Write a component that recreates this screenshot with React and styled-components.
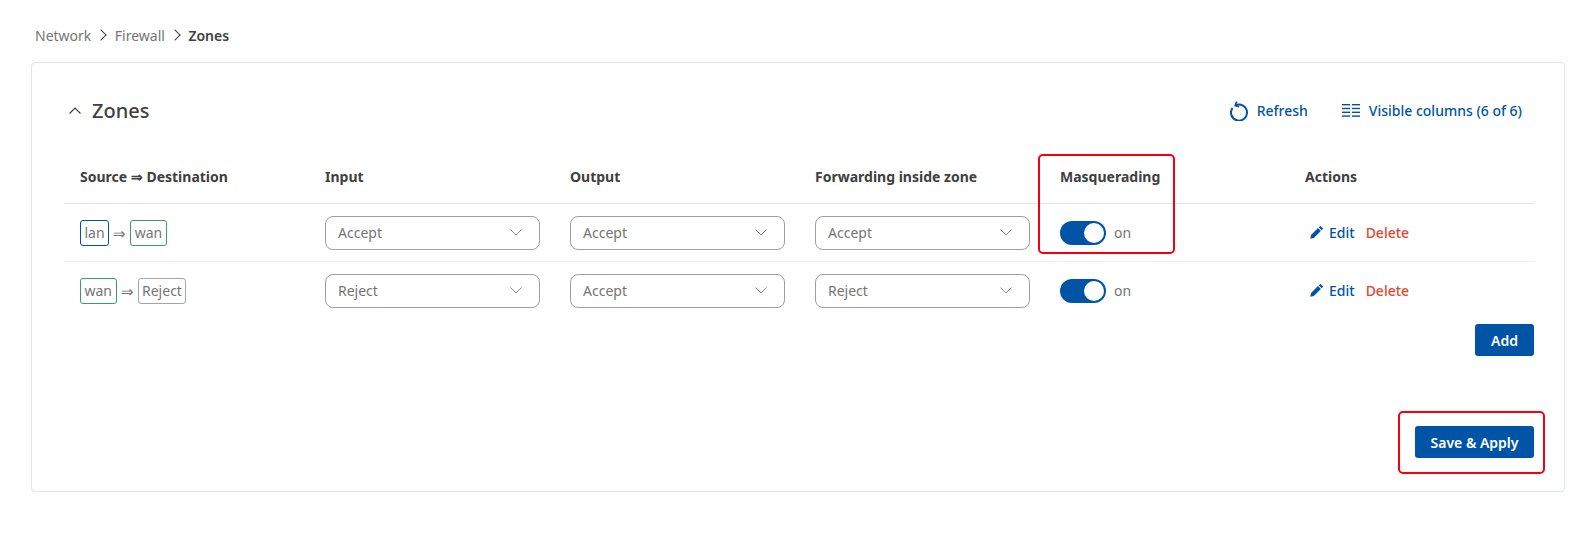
import React from 'react';
import styled, { createGlobalStyle } from 'styled-components';

const GlobalStyle = createGlobalStyle`
    html, body {
        margin: 0;
        padding: 0;
        background: #fff;
        font-family: "Noto Sans", "Open Sans", sans-serif;
        color: #404040;
    }
`;

const rows = [
    { from: ['lan', 'blue'], to: ['wan', 'green'], input: 'Accept', output: 'Accept', forward: 'Accept' },
    { from: ['wan', 'green'], to: ['Reject', 'gray'], input: 'Reject', output: 'Accept', forward: 'Reject' },
];

const Chevron = () => (
    <svg width="12" height="7" viewBox="0 0 12 7" fill="none" stroke="#8a8a94" strokeWidth="1">
        <path d="M0.5 0.5L6 6l5.5-5.5" />
    </svg>
);

const Select = ({ value }) => (
    <SelectBox>
        <span>{value}</span>
        <Chevron />
    </SelectBox>
);

function App() {
    return (
        <Page>
            <GlobalStyle />
            <Breadcrumbs>
                <span>Network</span>
                <Crumb />
                <span>Firewall</span>
                <Crumb />
                <strong>Zones</strong>
            </Breadcrumbs>
            <Card>
                <CardHeader>
                    <Title>
                        <svg width="12" height="7" viewBox="0 0 12 7" fill="none" stroke="#404040" strokeWidth="1.2">
                            <path d="M0.5 6.5L6 1l5.5 5.5" />
                        </svg>
                        Zones
                    </Title>
                    <Tools>
                        <ToolLink>
                            <svg width="18" height="20" viewBox="0 0 18 20" fill="none" stroke="#0054a6" strokeWidth="2">
                                <path d="M5.5 4.4A8 8 0 1 1 2.6 6.8" />
                                <path d="M6.6 0.6L5.2 4.6l4 1.2" strokeWidth="1.7" />
                            </svg>
                            Refresh
                        </ToolLink>
                        <ToolLink>
                            <svg width="18" height="13" viewBox="0 0 18 13" fill="#0054a6">
                                <rect x="0" y="0" width="8" height="1.4" />
                                <rect x="0" y="3.8" width="8" height="1.4" />
                                <rect x="0" y="7.6" width="8" height="1.4" />
                                <rect x="0" y="11.4" width="8" height="1.4" />
                                <rect x="10" y="0" width="8" height="1.4" />
                                <rect x="10" y="3.8" width="8" height="1.4" />
                                <rect x="10" y="7.6" width="8" height="1.4" />
                                <rect x="10" y="11.4" width="8" height="1.4" />
                            </svg>
                            Visible columns (6 of 6)
                        </ToolLink>
                    </Tools>
                </CardHeader>

                <HeadRow>
                    <HeadCell>Source ⇒ Destination</HeadCell>
                    <HeadCell>Input</HeadCell>
                    <HeadCell>Output</HeadCell>
                    <HeadCell>Forwarding inside zone</HeadCell>
                    <HeadCell>Masquerading</HeadCell>
                    <HeadCell>Actions</HeadCell>
                </HeadRow>

                {rows.map((row, i) => (
                    <Row key={i} $last={i === rows.length - 1}>
                        <Cell>
                            <Tag $tone={row.from[1]}>{row.from[0]}</Tag>
                            <Arrow>⇒</Arrow>
                            <Tag $tone={row.to[1]}>{row.to[0]}</Tag>
                        </Cell>
                        <Cell><Select value={row.input} /></Cell>
                        <Cell><Select value={row.output} /></Cell>
                        <Cell><Select value={row.forward} /></Cell>
                        <Cell>
                            <Toggle />
                            <ToggleLabel>on</ToggleLabel>
                        </Cell>
                        <Cell>
                            <EditLink>
                                <svg width="13" height="13" viewBox="0 0 13 13" fill="#0054a6">
                                    <path d="M0.3 12.7l0.7-3.6 7-7 2.9 2.9-7 7z" />
                                    <path d="M8.8 1.3l0.9-0.9a1 1 0 0 1 1.4 0l1.5 1.5a1 1 0 0 1 0 1.4l-0.9 0.9z" />
                                </svg>
                                Edit
                            </EditLink>
                            <DeleteLink>Delete</DeleteLink>
                        </Cell>
                    </Row>
                ))}

                <AddRow>
                    <Button $minWidth={59}>Add</Button>
                </AddRow>
                <SaveRow>
                    <Button>Save &amp; Apply</Button>
                </SaveRow>
            </Card>
            <Highlight $left={1038} $top={154} $width={137} $height={100} />
            <Highlight $left={1398} $top={411} $width={147} $height={63} />
        </Page>
    );
}

export default App;

const Page = styled.div`
    position: relative;
    width: 1575px;
    height: 539px;
    overflow: hidden;
    padding: 25px 10px 0 31px;
    box-sizing: border-box;
`;

const Breadcrumbs = styled.div`
    display: flex;
    align-items: center;
    height: 20px;
    margin-left: 4px;
    font-size: 14px;
    color: #757575;

    strong {
        font-weight: 600;
        color: #404040;
    }
`;

const Crumb = styled.i`
    width: 7px;
    height: 7px;
    margin: 0 9.5px 0 6px;
    border-top: 1px solid #404040;
    border-right: 1px solid #404040;
    transform: rotate(45deg);
`;

const Card = styled.div`
    margin-top: 17px;
    width: 1534px;
    height: 430px;
    box-sizing: border-box;
    padding: 0 30px 0 32px;
    border: 1px solid #dfe5ee;
    border-radius: 4px;
`;

const CardHeader = styled.div`
    display: flex;
    align-items: center;
    justify-content: space-between;
    height: 93px;
    padding: 2px 12px 0 5px;
    box-sizing: border-box;
`;

const Title = styled.div`
    display: flex;
    align-items: center;
    gap: 11px;
    font-size: 20px;
    font-weight: 500;
    color: #404040;
`;

const Tools = styled.div`
    display: flex;
    align-items: center;
    gap: 34px;
`;

const ToolLink = styled.a`
    display: flex;
    align-items: center;
    gap: 9px;
    font-size: 14px;
    font-weight: 500;
    color: #0054a6;
`;

const gridColumns = `
    display: grid;
    grid-template-columns: repeat(6, 245px);
    align-items: center;
    box-sizing: border-box;
`;

const HeadRow = styled.div`
    ${gridColumns}
    height: 48px;
    padding-bottom: 6px;
    border-bottom: 1px solid #e2e5ee;
`;

const HeadCell = styled.div`
    padding-left: 16px;
    font-size: 14px;
    font-weight: 700;
    color: #404040;
`;

const Row = styled.div`
    ${gridColumns}
    height: 58px;
    border-bottom: 1px solid ${props => props.$last ? 'transparent' : '#eeeff3'};
`;

const Cell = styled.div`
    display: flex;
    align-items: center;
    padding-left: 16px;
    font-size: 14px;
`;

const toneColors = { blue: '#0054a6', green: '#3a9d63', gray: '#a3a3ab' };

const Tag = styled.span`
    display: inline-flex;
    align-items: center;
    height: 26px;
    box-sizing: border-box;
    padding: 0 3.5px;
    border: 1px solid ${props => toneColors[props.$tone]};
    border-radius: 3px;
    color: #757575;
`;

const Arrow = styled.span`
    margin: 0 4px;
    font-size: 15px;
    color: #757575;
`;

const SelectBox = styled.div`
    display: flex;
    align-items: center;
    justify-content: space-between;
    width: 215px;
    height: 34px;
    box-sizing: border-box;
    padding: 0 17px 0 12px;
    border: 1px solid #9e9ea8;
    border-radius: 8px;
    color: #757575;
`;

const Toggle = styled.span`
    position: relative;
    display: block;
    width: 46px;
    height: 24px;
    border-radius: 12px;
    background: #0054a6;

    &::after {
        content: '';
        position: absolute;
        top: 2px;
        right: 2px;
        width: 20px;
        height: 20px;
        border-radius: 50%;
        background: #fff;
    }
`;

const ToggleLabel = styled.span`
    margin-left: 8px;
    color: #757575;
`;

const EditLink = styled.a`
    display: flex;
    align-items: center;
    gap: 6px;
    margin-left: 5px;
    font-weight: 500;
    color: #0054a6;
`;

const DeleteLink = styled.a`
    margin-left: 11px;
    font-weight: 500;
    color: #e0492f;
`;

const AddRow = styled.div`
    display: flex;
    justify-content: flex-end;
    margin-top: 4px;
`;

const SaveRow = styled.div`
    display: flex;
    justify-content: flex-end;
    margin-top: 70px;
`;

const Button = styled.button`
    height: 32px;
    min-width: ${props => props.$minWidth || 0}px;
    padding: 0 15.5px;
    border: none;
    border-radius: 3px;
    background: #0054a6;
    color: #fff;
    font-family: inherit;
    font-size: 14px;
    font-weight: 600;
`;

const Highlight = styled.div`
    position: absolute;
    left: ${props => props.$left}px;
    top: ${props => props.$top}px;
    width: ${props => props.$width}px;
    height: ${props => props.$height}px;
    box-sizing: border-box;
    border: 2px solid #f5000f;
    border-radius: 5px;
    pointer-events: none;
`;
